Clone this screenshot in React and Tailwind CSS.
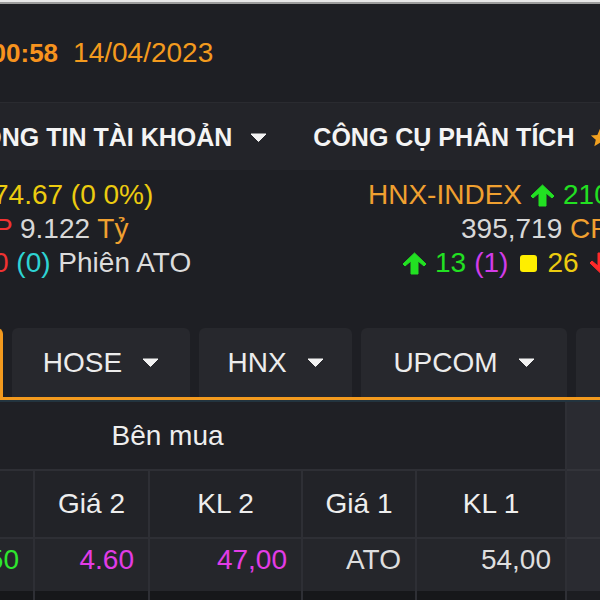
import React from 'react';

// Small drawn glyphs used across the board
function Caret({ className = '' }) {
  return (
    <svg width="17" height="9" viewBox="0 0 17 9" className={`shrink-0 ${className}`}>
      <path d="M1 1 L16 1 L8.5 8.5 Z" fill="#f2f2f2" stroke="#f2f2f2" strokeLinejoin="round" strokeWidth="1" />
    </svg>
  );
}

function ArrowUp({ color = '#22e022', className = '' }) {
  return (
    <svg width="25" height="23" viewBox="0 0 25 23" className={`shrink-0 ${className}`}>
      <path
        d="M12.5 1 L24 12 L22 14 L16 9 L16 22 L9 22 L9 9 L3 14 L1 12 Z"
        fill={color}
        stroke={color}
        strokeLinejoin="round"
        strokeWidth="1"
      />
    </svg>
  );
}

function ArrowDown({ color = '#ff2a2a', className = '' }) {
  return (
    <svg width="25" height="23" viewBox="0 0 25 23" className={`shrink-0 ${className}`}>
      <path
        d="M12.5 22 L24 11 L22 9 L16 14 L16 1 L9 1 L9 14 L3 9 L1 11 Z"
        fill={color}
        stroke={color}
        strokeLinejoin="round"
        strokeWidth="1"
      />
    </svg>
  );
}

const tabs = [
  { label: 'HOSE', w: 'w-[178px]' },
  { label: 'HNX', w: 'w-[153px]' },
  { label: 'UPCOM', w: 'w-[206px]' },
];

// widths of the six buy-side columns, first two lie off screen
const cols = [
  { head: 'Giá 3', w: 'w-[115px]', val: '', color: '' },
  { head: 'KL 3', w: 'w-[150px]', val: '23,50', color: 'text-[#2ee62e]' },
  { head: 'Giá 2', w: 'w-[115px]', val: '4.60', color: 'text-[#e23ce6]' },
  { head: 'KL 2', w: 'w-[153px]', val: '47,00', color: 'text-[#e23ce6]' },
  { head: 'Giá 1', w: 'w-[114px]', val: 'ATO', color: 'text-[#dedede]' },
  { head: 'KL 1', w: 'w-[150px]', val: '54,00', color: 'text-[#dedede]' },
];

export default function App() {
  return (
    <div className="w-[600px] h-[600px] overflow-hidden bg-[#1e1f24] font-['Liberation_Sans',Arial,sans-serif] whitespace-nowrap">
      {/* window edge */}
      <div className="h-[2px] bg-[#e8e8e8]" />
      <div className="h-[2px] bg-[#9c9c9c]" />

      {/* Clock */}
      <div className="h-[98px] flex items-center leading-[34px]">
        <span className="shrink-0 -ml-[46px] text-[26px] font-bold text-[#f7931e]">10:00:58</span>
        <span className="shrink-0 ml-[15px] text-[28px] text-[#f39a1e]">14/04/2023</span>
      </div>

      {/* Menu */}
      <div className="h-[68px] flex items-center bg-[#232429] border-t border-[#2a2b30] text-[25px] font-bold text-[#f4f4f4] leading-[30px]">
        <div className="shrink-0 -ml-[51px] flex items-center gap-[18px]">
          <span>THÔNG TIN TÀI KHOẢN</span>
          <Caret className="mt-[2px]" />
        </div>
        <div className="shrink-0 ml-[46px] flex items-center gap-[15px]">
          <span>CÔNG CỤ PHÂN TÍCH</span>
          <svg width="22" height="22" viewBox="0 0 24 24" className="shrink-0 mt-[2px]">
            <path d="M12 2 L14.9 8.6 L22 9.3 L16.6 14 L18.2 21 L12 17.3 L5.8 21 L7.4 14 L2 9.3 L9.1 8.6 Z" fill="#f0a020" />
          </svg>
        </div>
      </div>

      {/* Index summary */}
      <div className="h-[158px] flex pt-[8px] text-[28px] leading-[34px]">
        <div className="w-[368px] shrink-0 flex flex-col">
          <div className="-ml-[7px] text-[#eccb10]">74.67 (0 0%)</div>
          <div className="-ml-[6px]">
            <span className="text-[#f03232]">P</span>
            <span className="text-[#d8d8d8]"> 9.122 </span>
            <span className="text-[#f0a030]">Tỷ</span>
          </div>
          <div className="-ml-[7px]">
            <span className="text-[#f03232]">0</span>
            <span className="text-[#2ed3d3]"> (0)</span>
            <span className="text-[#dcdcdc]"> Phiên ATO</span>
          </div>
        </div>
        <div className="shrink-0 flex flex-col">
          <div className="flex items-center">
            <span className="text-[#f0a030]">HNX-INDEX</span>
            <ArrowUp className="ml-[8px]" />
            <span className="ml-[8px] text-[#22e022]">210.86</span>
          </div>
          <div className="pl-[93px]">
            <span className="text-[#d8d8d8]">395,719 </span>
            <span className="text-[#f0a030]">CP</span>
          </div>
          <div className="pl-[34px] flex items-center">
            <ArrowUp />
            <span className="ml-[8px] text-[#22e022]">13</span>
            <span className="ml-[8px] text-[#d23ce8]">(1)</span>
            <span className="shrink-0 ml-[12px] w-[17px] h-[17px] rounded-[3px] bg-[#ffee00]" />
            <span className="ml-[10px] text-[#eccb10]">26</span>
            <ArrowDown className="ml-[10px]" />
          </div>
        </div>
      </div>

      {/* Exchange tabs */}
      <div className="flex items-end h-[69px] gap-[9px]">
        <div className="shrink-0 -ml-[97px] w-[100px] h-[72px] border-t-[3px] border-r-[3px] border-[#f39a1e] rounded-tr-md bg-[#1e1f24] -mb-[3px]" />
        {tabs.map((t) => (
          <div
            key={t.label}
            className={`${t.w} shrink-0 h-[69px] bg-[#27282d] rounded-t-md flex items-center justify-center gap-[20px] text-[28px] text-[#ececec]`}
          >
            <span>{t.label}</span>
            <Caret />
          </div>
        ))}
        <div className="shrink-0 w-[40px] h-[69px] bg-[#27282d] rounded-t-md" />
      </div>
      <div className="h-[3px] bg-[#f39a1e]" />
      <div className="h-[2px] bg-[#23343f]" />

      {/* Buy side table */}
      <div className="flex text-[28px] text-[#eeeeee]">
        <div className="shrink-0 -ml-[230px] flex flex-col">
          <div className="h-[69px] flex items-center justify-center border-b-2 border-r-2 border-[#2e2f35] bg-[#1f2025] w-[797px]">
            Bên mua
          </div>
          <div className="flex h-[68px] bg-[#222328] border-b-2 border-[#2e2f35]">
            {cols.map((c) => (
              <div key={c.head} className={`${c.w} shrink-0 border-r-2 border-[#2e2f35] flex items-center justify-center`}>
                {c.head}
              </div>
            ))}
          </div>
          <div className="flex h-[52px] bg-[#25262b]">
            {cols.map((c) => (
              <div key={c.head} className={`${c.w} shrink-0 border-r-2 border-[#2e2f35] text-right pr-[14px] leading-[42px] ${c.color}`}>
                {c.val}
              </div>
            ))}
          </div>
          <div className="flex h-[20px] bg-[#16171a]">
            {cols.map((c) => (
              <div key={c.head} className={`${c.w} shrink-0 border-r-2 border-[#2e2f35]`} />
            ))}
          </div>
        </div>
        <div className="flex-1 flex flex-col bg-[#2a2b31]">
          <div className="h-[69px] border-b-2 border-[#33343a]" />
          <div className="h-[68px] border-b-2 border-[#33343a]" />
          <div className="h-[52px]" />
          <div className="h-[20px] bg-[#1c1d21]" />
        </div>
      </div>
    </div>
  );
}
